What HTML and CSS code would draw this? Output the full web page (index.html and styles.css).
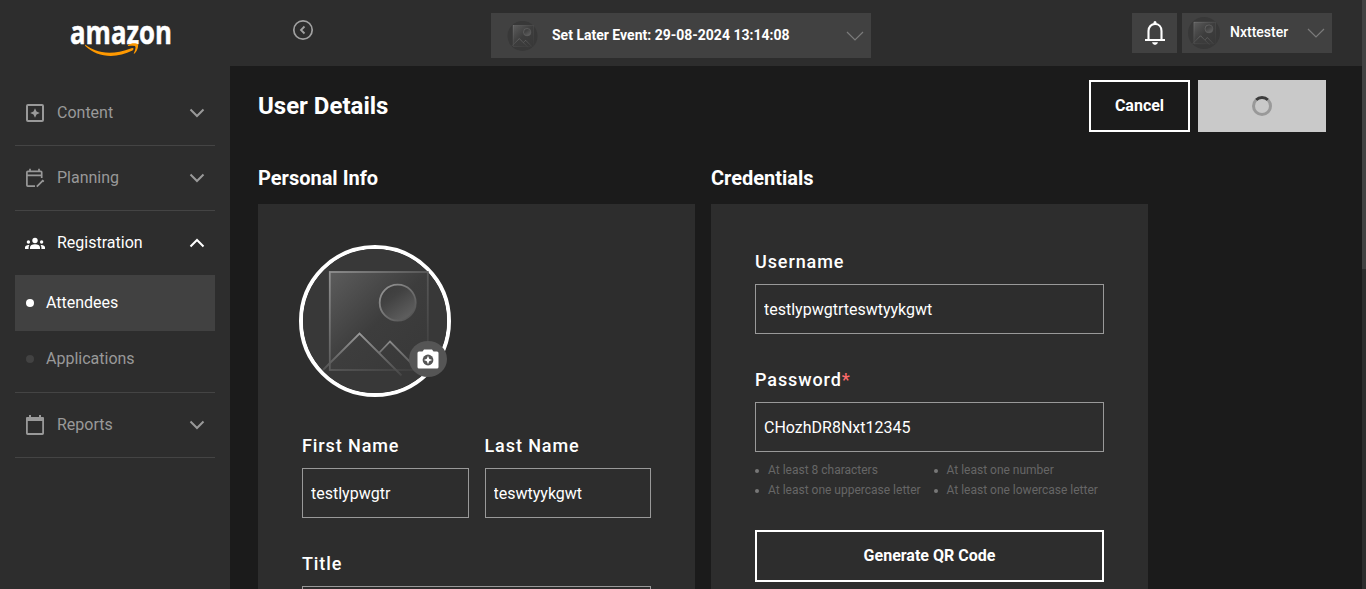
FILE: index.html
```html
<!DOCTYPE html>
<html lang="en">
<head>
<meta charset="utf-8">
<title>User Details</title>
<link rel="stylesheet" href="styles.css">
</head>
<body>
<svg class="defs" width="0" height="0" aria-hidden="true">
  <defs>
    <linearGradient id="fill" x1="0" y1="0" x2="1" y2="1"><stop offset="0" stop-color="#5c5c5c"/><stop offset=".5" stop-color="#3d3d3d"/><stop offset="1" stop-color="#383838"/></linearGradient>
    <linearGradient id="edge" x1="0" y1="0" x2="1" y2="1"><stop offset="0" stop-color="#909090"/><stop offset=".55" stop-color="#555"/><stop offset="1" stop-color="#3c3c3c"/></linearGradient>
    <linearGradient id="sun" x1="0" y1="0" x2=".7" y2="1"><stop offset="0" stop-color="#3a3a3a"/><stop offset=".4" stop-color="#424242"/><stop offset="1" stop-color="#606060"/></linearGradient>
    <linearGradient id="sunEdge" x1="0" y1="0" x2="1" y2="1"><stop offset="0" stop-color="#999"/><stop offset="1" stop-color="#4c4c4c"/></linearGradient>
    <linearGradient id="hill" x1="0" y1="0" x2="0" y2="1"><stop offset="0" stop-color="#999"/><stop offset="1" stop-color="#454545"/></linearGradient>
    <symbol id="placeholder" viewBox="0 0 144 144">
      <circle cx="72" cy="72" r="72" fill="#383838"/>
      <rect x="26.8" y="23" width="98" height="98" fill="url(#fill)" stroke="url(#edge)" stroke-width="1.800"/>
      <circle cx="94.7" cy="53.7" r="18" fill="url(#sun)" stroke="url(#sunEdge)" stroke-width="1.800"/>
      <path d="M20 121L56.500 84.500L98.500 126.500M76.500 103.500L87 92.500L115 121" fill="none" stroke="url(#hill)" stroke-width="1.800"/>
    </symbol>
  </defs>
</svg>
<div class="app">
  <aside class="sidebar">
    <div class="brand">
      <svg width="110" height="56" viewBox="0 0 110 56">
        <text class="brand-name" x="0" y="35.500" textLength="102" lengthAdjust="spacingAndGlyphs">amazon</text>
        <g fill="#ff9900" transform="translate(0 12)">
          <path d="M15.300 24.700C24 31 38 37 61.500 28.200C63.500 27.500 64.500 29 62.500 30.500C46 39 27 37.500 15.300 26C14.700 25.200 15 24.500 15.300 24.700Z"/>
          <path d="M58 25.200C61 22.800 66 23 67.600 24C69 25 67.500 31 64.500 33.600C64 34 63.600 33.700 63.800 33.200C65 30.200 66 27.500 65.300 26.400C64.300 25.400 61 25.700 58.700 26C58 26.100 57.500 25.700 58 25.200Z"/>
        </g>
      </svg>
    </div>
    <nav class="nav">
      <a class="nav-item">
        <svg class="nav-icon" viewBox="0 0 20 20"><rect x="2" y="2" width="16" height="16" rx="1" fill="none" stroke="currentColor" stroke-width="2"/><path d="M10 5.200L11.500 8.500L14.800 10L11.500 11.500L10 14.800L8.500 11.500L5.200 10L8.500 8.500Z" fill="currentColor"/></svg>
        <span>Content</span>
        <svg class="chevron" viewBox="0 0 16 10"><path d="M1.500 1.500L8 8L14.500 1.500" /></svg>
      </a>
      <a class="nav-item">
        <svg class="nav-icon" viewBox="0 0 20 20" fill="none" stroke="currentColor" stroke-width="1.700"><path d="M10 18.200H2.800Q1.900 18.200 1.900 17.300V4.200Q1.900 3.300 2.800 3.300H15.800Q16.700 3.300 16.700 4.200V10M2 7.300H16.500M5 .800V4M14 .800V4M11.800 18.600L17.600 12.800" /><path d="M17.200 12L18.800 13.600" stroke-width="1.500"/></svg>
        <span>Planning</span>
        <svg class="chevron" viewBox="0 0 16 10"><path d="M1.500 1.500L8 8L14.500 1.500" /></svg>
      </a>
      <div class="nav-group">
        <a class="nav-item nav-open">
          <svg class="nav-icon" viewBox="0 0 20 20" fill="currentColor"><circle cx="10" cy="7.500" r="2.700"/><circle cx="3.400" cy="9" r="1.700"/><circle cx="16.600" cy="9" r="1.700"/><path d="M5 16V14.400C5 12.500 7.200 11.300 10 11.300S15 12.500 15 14.400V16ZM0 16V14.300C0 12.800 1.800 11.700 4.400 12C3.900 12.800 3.600 13.600 3.600 14.400V16ZM20 16V14.300C20 12.800 18.200 11.700 15.600 12C16.100 12.800 16.400 13.600 16.400 14.400V16Z"/></svg>
          <span>Registration</span>
          <svg class="chevron" viewBox="0 0 16 10"><path d="M1.500 8.500L8 2L14.500 8.500" /></svg>
        </a>
        <a class="sub-item active"><i class="dot"></i>Attendees</a>
        <a class="sub-item"><i class="dot"></i>Applications</a>
      </div>
      <a class="nav-item">
        <svg class="nav-icon" viewBox="0 0 20 20"><path d="M1.900 4V18.300Q1.900 19 2.600 19H17.400Q18.100 19 18.100 18.300V4" fill="none" stroke="currentColor" stroke-width="1.800"/><path d="M1 3Q1 2 2 2H4V0H6V2H14V0H16V2H18Q19 2 19 3V6H1Z" fill="currentColor"/></svg>
        <span>Reports</span>
        <svg class="chevron" viewBox="0 0 16 10"><path d="M1.500 1.500L8 8L14.500 1.500" /></svg>
      </a>
    </nav>
  </aside>
  <div class="content">
    <header class="topbar">
      <svg class="collapse" width="22" height="22" viewBox="0 0 22 22" fill="none" stroke="#a0a0a0"><circle cx="11" cy="11" r="9.200" stroke-width="1.700"/><path d="M12.500 7.500L9 11L12.500 14.500" stroke-width="1.800"/></svg>
      <div class="event-select">
        <svg class="event-thumb"><use href="#placeholder"/></svg>
        <span>Set Later Event: 29-08-2024 13:14:08</span>
        <svg class="caret" viewBox="0 0 18 10"><path d="M1 1L9 9L17 1"/></svg>
      </div>
      <div class="bell">
        <svg width="22" height="26" viewBox="0 0 22 26"><path d="M4.500 19.500V11C4.500 6.800 7.200 4 11 4S17.500 6.800 17.500 11V19.500" fill="none" stroke="#fff" stroke-width="2.100"/><path d="M1 19H21V21H1ZM8 22.200H14Q13.300 25 11 25T8 22.200ZM9.500 4V2.500Q9.500 1 11 1T12.500 2.500V4Z" fill="#fff"/></svg>
      </div>
      <div class="user-select">
        <svg class="user-thumb"><use href="#placeholder"/></svg>
        <span>Nxttester</span>
        <svg class="caret" viewBox="0 0 18 10"><path d="M1 1L9 9L17 1"/></svg>
      </div>
    </header>
    <main class="page">
      <div class="page-head">
        <h1>User Details</h1>
        <button class="btn cancel">Cancel</button>
        <button class="btn saving" aria-label="Saving"><i class="spinner"></i></button>
      </div>
      <div class="columns">
        <section>
          <h2>Personal Info</h2>
          <div class="card personal">
            <div class="avatar">
              <svg class="avatar-img"><use href="#placeholder"/></svg>
              <span class="camera"><svg width="22" height="20" viewBox="0 0 22 20"><path fill="#fff" d="M2 2.500H5.500L7 .500H15L16.500 2.500H20Q21.500 2.500 21.500 4V18Q21.500 19.500 20 19.500H2Q.500 19.500 .500 18V4Q.500 2.500 2 2.500Z"/><circle cx="11" cy="11" r="5.400" fill="#555"/><path fill="#fff" d="M11 6.800L12.200 9.800L15.200 11L12.200 12.200L11 15.200L9.800 12.200L6.800 11L9.800 9.800Z"/></svg></span>
            </div>
            <div class="name-row">
              <label class="field"><span class="label">First Name</span><input value="testlypwgtr"></label>
              <label class="field"><span class="label">Last Name</span><input value="teswtyykgwt"></label>
            </div>
            <label class="field"><span class="label">Title</span><input value=""></label>
          </div>
        </section>
        <section>
          <h2>Credentials</h2>
          <div class="card">
            <label class="field"><span class="label">Username</span><input value="testlypwgtrteswtyykgwt"></label>
            <label class="field password"><span class="label">Password<b>*</b></span><input value="CHozhDR8Nxt12345"></label>
            <ul class="rules">
              <li>At least 8 characters</li>
              <li>At least one number</li>
              <li>At least one uppercase letter</li>
              <li>At least one lowercase letter</li>
            </ul>
            <button class="btn generate">Generate QR Code</button>
          </div>
        </section>
      </div>
    </main>
  </div>
  <div class="scrollbar"><div class="thumb"></div></div>
</div>
</body>
</html>
```

FILE: styles.css
```css
* { box-sizing: border-box; }
body { margin: 0; background: #1b1b1b; color: #fff; font-family: Roboto, "Liberation Sans", sans-serif; overflow: hidden; }
.defs { position: absolute; }
.app { display: flex; width: 100vw; height: 100vh; overflow: hidden; }
.sidebar { width: 230px; flex: none; background: #2d2d2d; }
.brand { height: 81px; padding: 8px 0 0 70px; }
.brand svg { display: block; }
.brand-name { font: 700 33px "Open Sans", sans-serif; fill: #fff; stroke: #fff; stroke-width: .5px; }
.nav { padding: 0 15px; }
.nav-item { display: flex; align-items: center; height: 65px; padding: 0 10px; border-bottom: 1px solid #444; color: #999; font-size: 16px; line-height: 20px; }
.nav-item span { flex: 1; margin: 0 0 0 12px; }
.nav-icon { width: 20px; height: 20px; }
.chevron { width: 16px; height: 10px; fill: none; stroke: currentColor; stroke-width: 2; }
.nav-group { height: 182px; border-bottom: 1px solid #444; }
.nav-open { height: 64px; border: 0; color: #fff; }
.sub-item { display: flex; align-items: center; gap: 12px; height: 56px; padding: 0 11px 2px; color: #999; font-size: 16px; }
.sub-item.active { background: #414141; color: #fff; }
.dot { width: 8px; height: 8px; margin-top: 2px; border-radius: 50%; background: #424242; }
.active .dot { background: #fff; }
.content { flex: 1; min-width: 0; }
.topbar { display: flex; align-items: flex-start; height: 66px; padding: 13px 30px 0 62px; background: #2d2d2d; }
.collapse { margin-top: 6px; }
.event-select { display: flex; align-items: center; width: 380px; height: 45px; margin: 0 261px 0 177px; padding: 0 7px 0 15px; background: #414141; font-size: 14px; font-weight: 700; }
.event-select span { flex: 1; margin: -2px 0 0 13px; }
.event-thumb { width: 33px; height: 30px; }
.caret { width: 18px; height: 10px; fill: none; stroke: #7b7b7b; stroke-width: 1.2; }
.bell { display: grid; place-items: center; width: 45px; height: 40px; margin-right: 5px; background: #414141; }
.user-select { display: flex; align-items: center; width: 150px; height: 40px; padding: 0 7px 0 6px; background: #414141; font-size: 14px; font-weight: 500; }
.user-select span { flex: 1; margin: -2px 0 0 10px; }
.user-thumb { width: 32px; height: 32px; }
.page { padding: 14px 36px 0 28px; }
.page-head { display: flex; gap: 8px; height: 52px; }
h1 { flex: 1; margin: 0; font-size: 24px; line-height: 52px; font-weight: 700; }
.btn { height: 52px; padding: 0 0 2px; background: none; border: 2px solid #fff; border-radius: 0; color: #fff; font: 700 16px Roboto, sans-serif; }
.cancel { width: 101px; }
.saving { display: grid; place-items: center; width: 128px; padding: 0; background: #c9c9c9; border: 0; }
.spinner { width: 20px; height: 20px; border: 3px solid #999; border-top-color: #3c3c3c; border-radius: 50%; }
.columns { display: flex; gap: 16px; margin-top: 32px; }
h2 { margin: 0 0 12px; font-size: 20px; line-height: 28px; font-weight: 700; }
.card { width: 437px; height: 620px; padding: 44px; background: #2d2d2d; }
.personal { padding-top: 41px; }
.avatar { position: relative; width: 152px; height: 152px; margin: 0 0 35px -3px; border: 4px solid #fff; border-radius: 50%; }
.avatar-img { display: block; width: 144px; height: 144px; }
.camera { position: absolute; right: 0; bottom: 16px; display: grid; place-items: center; width: 38px; height: 36px; padding: 0 1px 1px 0; border-radius: 50%; background: #555; }
.name-row { display: grid; grid-template-columns: 166.5px 166.5px; gap: 16px; margin-bottom: 32px; }
.field { display: block; }
.password { margin-top: 32px; }
.label { display: block; height: 36px; font-size: 18px; line-height: 27px; font-weight: 500; letter-spacing: .9px; }
.label b { color: #ff6b6b; font-weight: 500; }
input { display: block; width: 100%; height: 50px; padding: 0 8px; border: 1px solid #999; border-radius: 0; background: none; color: #fff; font: 400 16px Roboto, sans-serif; }
.rules { display: grid; grid-template-columns: 178.5px 1fr; margin: 8px 0 30px; padding: 0; list-style: none; color: #666; font-size: 12px; line-height: 20px; white-space: nowrap; }
.rules li { display: flex; align-items: center; gap: 9px; }
.rules li::before { content: ""; width: 4px; height: 4px; margin-top: 2px; border-radius: 50%; background: #777; }
.generate { width: 100%; }
.scrollbar { width: 4px; flex: none; background: #2d2d2d; }
.thumb { height: 269px; background: #424242; }
```
